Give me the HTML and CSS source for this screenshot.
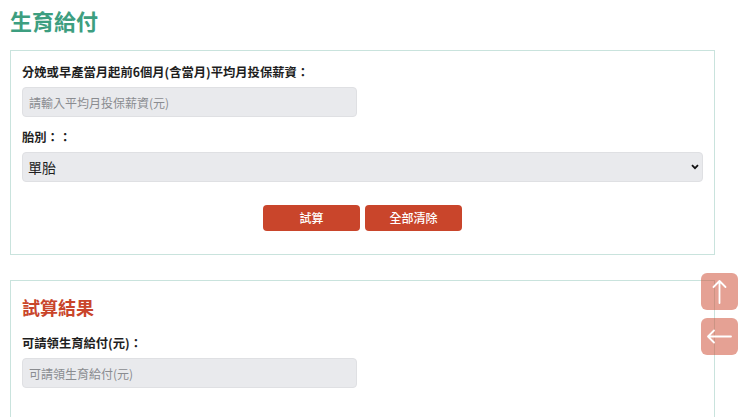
FILE: index.html
```html
<!DOCTYPE html>
<html>
<head>
    <meta charset="UTF-8">
    <title>生育給付</title>
    <link rel="stylesheet" href="styles.css">
</head>
<body>
<div class="page">
    <h1 class="page_title">生育給付</h1>

    <form class="calc_card" id="calcForm">
        <div class="form_group">
            <label for="salary">分娩或早產當月起前6個月(含當月)平均月投保薪資：</label>
            <input type="text" id="salary" class="field_text" placeholder="請輸入平均月投保薪資(元)">
        </div>

        <div class="form_group">
            <label for="babies">胎別：：</label>
            <div class="select_wrap">
                <select id="babies" class="field_select">
                    <option>單胎</option>
                    <option>雙胞胎</option>
                    <option>三胞胎</option>
                </select>
                <svg class="select_arrow" width="8" height="6" viewBox="0 0 8 6">
                    <path d="M1 1.2 L4 4.2 L7 1.2" fill="none" stroke="#111" stroke-width="1.8"/>
                </svg>
            </div>
        </div>

        <div class="btn_group">
            <button type="button" id="submit">試算</button>
            <button type="reset" id="reset">全部清除</button>
        </div>
    </form>

    <div class="calc_card result_card">
        <h2 class="result_title">試算結果</h2>
        <div class="form_group">
            <label for="result">可請領生育給付(元)：</label>
            <input type="text" id="result" class="field_text" placeholder="可請領生育給付(元)" readonly>
        </div>
    </div>
</div>

<div class="float_tools">
    <a class="float_btn" href="#top" title="回頁首">
        <svg width="37" height="37" viewBox="0 0 37 37">
            <path d="M18.5 8 V30 M12.5 14 L18.5 8 L24.5 14" fill="none" stroke="#fff" stroke-width="1.8" stroke-linecap="round" stroke-linejoin="round"/>
        </svg>
    </a>
    <a class="float_btn" href="#back" title="回上一頁">
        <svg width="37" height="37" viewBox="0 0 37 37">
            <path d="M7 18.5 H30 M13 12.5 L7 18.5 L13 24.5" fill="none" stroke="#fff" stroke-width="1.8" stroke-linecap="round" stroke-linejoin="round"/>
        </svg>
    </a>
</div>
</body>
</html>
```

FILE: styles.css
```css
body {
    margin: 0;
    font-family: "Noto Sans CJK TC", "Liberation Sans", sans-serif;
    font-size: 12px;
    color: #222;
    background: #fff;
}

.page {
    width: 705px;
    padding: 5px 0 0 10px;
}

.page_title {
    margin: 0;
    font-size: 22px;
    line-height: 30px;
    font-weight: 700;
    color: #3d9e80;
}

.calc_card {
    margin: 15px 0 0;
    border: 1px solid #c9e3dd;
    padding: 12px 11px 23px;
}

.result_card {
    margin-top: 25px;
    padding-bottom: 40px;
}

.form_group {
    margin-bottom: 11px;
}

.form_group label {
    display: block;
    font-weight: 700;
    font-size: 12.3px;
    line-height: 18px;
    margin-bottom: 6px;
    color: #1e1e1e;
}

.field_text {
    display: block;
    box-sizing: border-box;
    width: 335px;
    height: 30px;
    padding: 0 6px;
    border: 1px solid #dfe0e3;
    border-radius: 4px;
    background: #e9eaed;
    font: 12px "Noto Sans CJK TC", "Liberation Sans", sans-serif;
    color: #333;
    outline: none;
}

.field_text::placeholder {
    color: #8a8c90;
}

.select_wrap {
    position: relative;
}

.field_select {
    display: block;
    box-sizing: border-box;
    width: 100%;
    height: 30px;
    padding: 0 5px;
    border: 1px solid #dfe0e3;
    border-radius: 4px;
    background: #e9eaed;
    font: 14px "Noto Sans CJK TC", "Liberation Sans", sans-serif;
    color: #1e1e1e;
    appearance: none;
    -webkit-appearance: none;
    outline: none;
}

.select_arrow {
    position: absolute;
    right: 4px;
    top: 12px;
    pointer-events: none;
}

.btn_group {
    display: flex;
    justify-content: center;
    gap: 5px;
    margin-top: 23px;
}

.btn_group button {
    width: 97px;
    height: 26px;
    margin: 0;
    padding: 0;
    border: none;
    border-radius: 4px;
    background: #c9452b;
    color: #fff;
    font: 500 12px/26px "Noto Sans CJK TC", "Liberation Sans", sans-serif;
    cursor: pointer;
}

.result_title {
    margin: 0 0 13px;
    font-size: 18px;
    line-height: 28px;
    font-weight: 700;
    color: #c9452b;
}

.float_tools {
    position: fixed;
    right: 2px;
    top: 273px;
    display: flex;
    flex-direction: column;
    gap: 8px;
}

.float_btn {
    display: block;
    width: 37px;
    height: 37px;
    border-radius: 6px;
    background: rgba(205, 75, 50, 0.52);
}

.float_btn svg {
    display: block;
}
```
